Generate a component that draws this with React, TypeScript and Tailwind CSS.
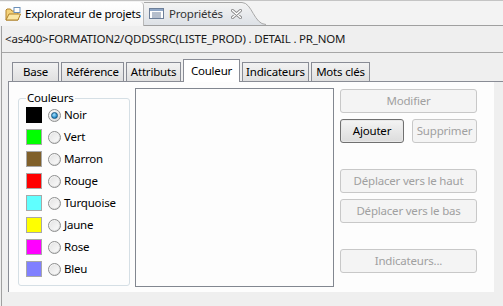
import React from "react";

const colors = [
  { name: "Noir", c: "#000000", sel: true },
  { name: "Vert", c: "#00ff00" },
  { name: "Marron", c: "#80602a" },
  { name: "Rouge", c: "#ff0000" },
  { name: "Turquoise", c: "#60ffff" },
  { name: "Jaune", c: "#ffff00" },
  { name: "Rose", c: "#ff00ff" },
  { name: "Bleu", c: "#8080ff" },
];

function Radio({ sel }: { sel?: boolean }) {
  return (
    <div className="w-[13px] h-[13px] rounded-full border border-[#8e8f8f] bg-gradient-to-br from-[#ffffff] to-[#d6d6d6] flex items-center justify-center">
      {sel ? (
        <div className="w-[7px] h-[7px] rounded-full bg-[radial-gradient(circle_at_40%_35%,#a9e2ff,#1d86c4_70%,#0c4f7c)] border border-[#1a5a86]" />
      ) : (
        <div className="w-[9px] h-[9px] rounded-full bg-gradient-to-br from-[#e4e4e4] to-[#fafafa]" />
      )}
    </div>
  );
}

function Btn({ label, w, def = false }: { label: string; w: string; def?: boolean }) {
  return (
    <div
      className={
        "h-[24px] rounded-[3px] border flex items-center justify-center text-[11.5px] whitespace-nowrap " +
        w +
        (def
          ? " border-[#707070] bg-gradient-to-b from-[#f4f4f4] to-[#dcdcdc] text-black shadow-[inset_0_0_0_1px_#e8e8e8]"
          : " border-[#c8c8c8] bg-[#f4f4f4] text-[#a0a0a0]")
      }
    >
      {label}
    </div>
  );
}

function Tab({ label, w, active }: { label: string; w: string; active?: boolean }) {
  return (
    <div
      className={
        "border border-b-0 flex justify-center text-[11.5px] whitespace-nowrap " +
        w +
        (active
          ? " h-[23px] border-[#898c95] bg-white -mb-[1px] relative z-10 items-start pt-[2px]"
          : " h-[19px] border-[#898c95] bg-gradient-to-b from-[#f2f2f2] to-[#e0e0e0] items-center")
      }
    >
      {label}
    </div>
  );
}

export default function App() {
  return (
    <div
      className="w-[503px] h-[306px] bg-[#efefef] overflow-hidden text-black flex flex-col tracking-[-0.2px]"
      style={{ fontFamily: '"Noto Sans", "Open Sans", sans-serif', fontSize: "11px" }}
    >
      {/* top view tabs */}
      <div className="h-[26px] flex items-end border-b border-[#a0a0a0] bg-[#f3f3f3] border-t border-t-[#c4c4c4] shrink-0 relative">
        <div className="w-[144px] h-[24px] bg-gradient-to-b from-white to-[#f4f4f4] border-r border-[#b8b8b8] rounded-tr-[4px] flex items-center pl-[5px] gap-[4px] -mb-[1px] relative z-10 whitespace-nowrap">
          <svg width="16" height="14" viewBox="0 0 16 14" className="shrink-0">
            <path d="M1 3 L1 13 L13 13 L13 4 L7 4 L5.5 2 L2 2 Z" fill="#f4d27a" stroke="#b0812a" strokeWidth="1" />
            <path d="M1 13 L4 7 L15.5 7 L13 13 Z" fill="#fbe7a4" stroke="#b0812a" strokeWidth="1" />
            <rect x="9" y="0.5" width="6" height="5" fill="#fff" stroke="#6b8fb8" />
          </svg>
          <span className="text-[11.5px]">Explorateur de projets</span>
        </div>
        <div className="relative h-[23px] flex items-center pl-[5px] gap-[5px] text-[#333]">
          <svg className="absolute left-0 top-0" width="123" height="23" viewBox="0 0 123 23">
            <defs>
              <linearGradient id="tg" x1="0" y1="0" x2="0" y2="1">
                <stop offset="0" stopColor="#f4f4f4" />
                <stop offset="1" stopColor="#dde1e6" />
              </linearGradient>
            </defs>
            <path d="M0 23 L0 0.5 L98 0.5 C108 0.5 110 22.5 122 22.5 L122 23 Z" fill="url(#tg)" />
            <path d="M0 0.5 L98 0.5 C108 0.5 110 22.5 122 22.5" fill="none" stroke="#a8a8a8" />
          </svg>
          <svg className="relative" width="15" height="11" viewBox="0 0 15 11">
            <rect x="0.5" y="0.5" width="14" height="10" fill="#fff" stroke="#6d7f99" />
            <rect x="1" y="1" width="13" height="2" fill="#8fa6c6" />
            <line x1="3" y1="5" x2="12" y2="5" stroke="#6d7f99" />
            <line x1="3" y1="7" x2="12" y2="7" stroke="#6d7f99" />
            <line x1="3" y1="9" x2="12" y2="9" stroke="#6d7f99" />
          </svg>
          <span className="relative text-[11.5px]">Propriétés</span>
          <svg className="relative ml-[3px]" width="11" height="10" viewBox="0 0 11 10">
            <path d="M1.5 1.5 L9.5 8.5 M9.5 1.5 L1.5 8.5" stroke="#8a8a8a" strokeWidth="3" strokeLinecap="round" />
            <path d="M1.5 1.5 L9.5 8.5 M9.5 1.5 L1.5 8.5" stroke="#ffffff" strokeWidth="1.3" strokeLinecap="round" />
          </svg>
        </div>
      </div>

      {/* body */}
      <div className="flex-1 ml-[1px] border-l border-[#a0a0a0] flex flex-col">
        <div className="h-[27px] shrink-0 border-b border-[#a6a6a6] flex items-center pl-[3px] text-[#1a1a1a] whitespace-nowrap">
          <span className="text-[11.5px]">&lt;as400&gt;FORMATION2/QDDSSRC(LISTE_PROD) . DETAIL . PR_NOM</span>
        </div>

        {/* properties tabs */}
        <div className="flex items-end pl-[4px] h-[29px] shrink-0 border-b border-[#898c95] ml-[6px]">
          <div className="flex items-end gap-[2px]">
            <Tab label="Base" w="w-[47px]" />
            <Tab label="Référence" w="w-[63px]" />
            <Tab label="Attributs" w="w-[55px]" />
            <Tab label="Couleur" w="w-[57px]" active />
            <Tab label="Indicateurs" w="w-[67px]" />
            <Tab label="Mots clés" w="w-[59px]" />
          </div>
        </div>

        {/* panel */}
        <div className="ml-[6px] mr-[9px] h-[210px] shrink-0 border-l border-[#898c95] bg-[#fdfdfd] flex pt-[6px]">
          {/* group */}
          <div className="ml-[9px] mt-[10px] w-[112px] h-[188px] border border-[#d5dfe5] rounded-[3px] relative pt-[8px] pl-[7px]">
            <div className="absolute left-[7px] -top-[9px] px-[1px] bg-[#fdfdfd] text-[11.5px] leading-[16px]">Couleurs</div>
            <div className="flex flex-col gap-[6px]">
              {colors.map((c) => (
                <div key={c.name} className="flex items-center h-[16px]">
                  <div
                    className={"w-[16px] h-[16px] " + (c.name === "Noir" ? "" : "border border-[#a8a8a8]")}
                    style={{ backgroundColor: c.c }}
                  />
                  <div className="ml-[6px]">
                    <Radio sel={c.sel} />
                  </div>
                  <span className="ml-[3px] text-[11.5px]">{c.name}</span>
                </div>
              ))}
            </div>
          </div>

          {/* list */}
          <div className="ml-[5px] w-[199px] h-[199px] border border-[#828790] bg-[#fdfdfd]" />

          {/* buttons */}
          <div className="ml-[6px] mt-[1px] w-[137px] flex flex-col">
            <Btn label="Modifier" w="w-[137px]" />
            <div className="flex gap-[8px] mt-[6px]">
              <Btn label="Ajouter" w="w-[64px]" def />
              <Btn label="Supprimer" w="w-[65px]" />
            </div>
            <div className="mt-[26px]">
              <Btn label="Déplacer vers le haut" w="w-[137px]" />
            </div>
            <div className="mt-[6px]">
              <Btn label="Déplacer vers le bas" w="w-[137px]" />
            </div>
            <div className="mt-[26px]">
              <Btn label="Indicateurs..." w="w-[137px]" />
            </div>
          </div>
        </div>
      </div>
    </div>
  );
}
